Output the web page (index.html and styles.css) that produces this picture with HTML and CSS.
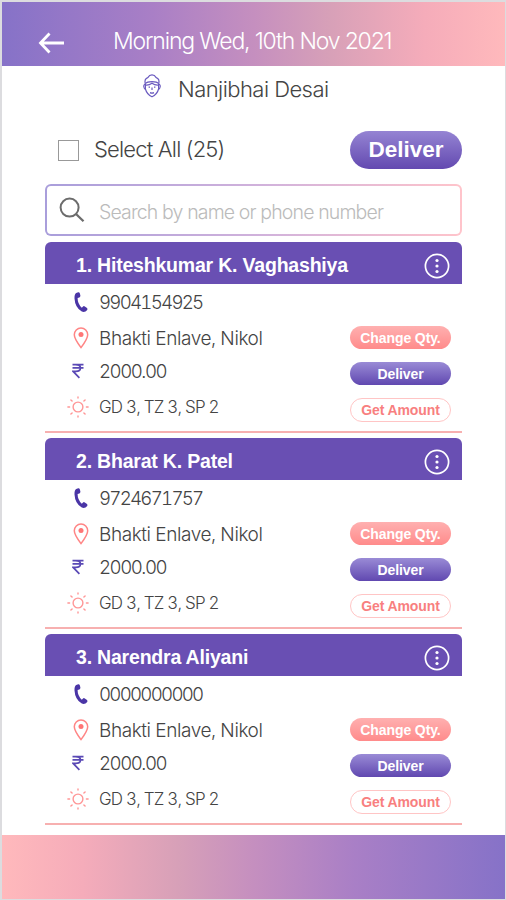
FILE: index.html
```html
<!DOCTYPE html>
<html lang="en">
<head>
    <meta charset="UTF-8">
    <title>Morning Delivery</title>
    <link rel="stylesheet" href="styles.css">
</head>
<body>
    <!-- shared icons -->
    <svg class="icon-defs" width="0" height="0">
        <symbol id="icon-phone" viewBox="0 0 14 21">
            <path d="M2.2 1 L4.2 0.3 Q5.4 .1 5.8 1.3 L6.4 3.6 Q6.4 5 5.4 5.4 L3.6 6 Q3.6 11.8 7.8 15.8 L8.8 14.7 Q9.7 13.7 10.8 14.4 L13 16 Q13.9 16.9 13.2 17.9 Q11 20.8 7.8 19.6 Q1 15.4 .5 6.4 Q.3 2.2 2.2 1 Z" fill="#4a35a6"/>
        </symbol>
        <symbol id="icon-pin" viewBox="0 0 16 22">
            <path d="M8 20.6 Q1.3 11.6 1.3 7.7 A6.7 6.7 0 0 1 14.7 7.7 Q14.7 11.6 8 20.6 Z" fill="none" stroke="#ff8585" stroke-width="1.5"/>
            <circle cx="8" cy="7.6" r="2.5" fill="#ff7575"/>
        </symbol>
        <symbol id="icon-rupee" viewBox="0 0 12 16">
            <path d="M.5 1.6 H11.5 M.5 4.9 H11.5 M3.5 1.6 Q8.4 1.6 8.4 4.9 Q8.4 8.4 3.8 8.4 H1.2 L7.4 14.8" fill="none" stroke="#5a49b5" stroke-width="1.7"/>
        </symbol>
        <symbol id="icon-sun" viewBox="0 0 22 22">
            <g fill="none" stroke="#ff9696" stroke-width="1.4" stroke-linecap="round">
                <circle cx="11" cy="11" r="4.9"/>
                <path d="M11 .9 V2.1 M11 19.9 V21.1 M.9 11 H2.6 M19.4 11 H21.1 M3.9 3.9 L5.1 5.1 M16.9 16.9 L18.1 18.1 M3.9 18.1 L5.1 16.9 M16.9 5.1 L18.1 3.9"/>
            </g>
        </symbol>
        <symbol id="icon-more" viewBox="0 0 26 26">
            <circle cx="13" cy="13" r="11.6" fill="none" stroke="#fff" stroke-width="1.7"/>
            <circle cx="13" cy="7.5" r="1.6" fill="#fff"/>
            <circle cx="13" cy="13" r="1.6" fill="#fff"/>
            <circle cx="13" cy="18.5" r="1.6" fill="#fff"/>
        </symbol>
    </svg>

    <div class="screen">
        <header class="top-bar">
            <svg class="back" width="28" height="24" viewBox="0 0 28 24">
                <path d="M12.5 2.5 L3.5 12 L12.5 21.5 M3.8 12 H27" fill="none" stroke="#fff" stroke-width="2.8"/>
            </svg>
            <h1>Morning Wed, 10th Nov 2021</h1>
        </header>

        <div class="person">
            <svg width="18" height="24" viewBox="0 0 18 24">
                <g fill="none" stroke="#6a5abf" stroke-width="1.2">
                    <path d="M2.2 9.6 Q1.2 4.8 4.8 3.6 Q6.4 .9 9 .9 Q11.6 .9 13.2 3.6 Q16.8 4.8 15.8 9.6"/>
                    <path d="M2.4 9.6 Q4 7.6 9 7.6 Q14 7.6 15.6 9.6 M2.6 11 Q6 11.4 9 9.2 Q12 11.4 15.4 11"/>
                    <path d="M2.4 9.6 V15 Q4 20.6 9 22.8 Q14 20.6 15.6 15 V9.6"/>
                    <path d="M2.4 10.3 Q.5 10.4 .8 12.8 Q1.1 15 2.6 15.3 M15.6 10.3 Q17.5 10.4 17.2 12.8 Q16.9 15 15.4 15.3"/>
                    <path d="M5.6 13.2 H7 M11 13.2 H12.4 M9 13.4 V16 M7 18.6 Q9 19.6 11 18.6"/>
                </g>
            </svg>
            <span>Nanjibhai Desai</span>
        </div>

        <div class="select-row">
            <span class="checkbox"></span>
            <span class="select-label">Select All (25)</span>
            <button class="btn-main">Deliver</button>
        </div>

        <div class="search">
            <svg width="26" height="26" viewBox="0 0 26 26">
                <circle cx="10.6" cy="10.6" r="9" fill="none" stroke="#6c6c6c" stroke-width="2"/>
                <path d="M17 17 L24.5 24.3" stroke="#6c6c6c" stroke-width="2.3"/>
            </svg>
            <span>Search by name or phone number</span>
        </div>

        <ul class="orders">
            <li class="order">
                <div class="order-head">
                    <h2>1. Hiteshkumar K. Vaghashiya</h2>
                    <svg width="26" height="26"><use href="#icon-more"/></svg>
                </div>
                <div class="order-body">
                    <div class="details">
                        <p class="phone"><i><svg width="14" height="21"><use href="#icon-phone"/></svg></i><span>9904154925</span></p>
                        <p class="place"><i><svg width="16" height="22"><use href="#icon-pin"/></svg></i><span>Bhakti Enlave, Nikol</span></p>
                        <p class="amount"><i><svg width="12" height="16"><use href="#icon-rupee"/></svg></i><span>2000.00</span></p>
                        <p class="items"><i><svg width="22" height="22"><use href="#icon-sun"/></svg></i><span>GD 3, TZ 3, SP 2</span></p>
                    </div>
                    <div class="actions">
                        <button class="btn btn-pink">Change Qty.</button>
                        <button class="btn btn-purple">Deliver</button>
                        <button class="btn btn-outline">Get Amount</button>
                    </div>
                </div>
            </li>
            <li class="order">
                <div class="order-head">
                    <h2>2. Bharat K. Patel</h2>
                    <svg width="26" height="26"><use href="#icon-more"/></svg>
                </div>
                <div class="order-body">
                    <div class="details">
                        <p class="phone"><i><svg width="14" height="21"><use href="#icon-phone"/></svg></i><span>9724671757</span></p>
                        <p class="place"><i><svg width="16" height="22"><use href="#icon-pin"/></svg></i><span>Bhakti Enlave, Nikol</span></p>
                        <p class="amount"><i><svg width="12" height="16"><use href="#icon-rupee"/></svg></i><span>2000.00</span></p>
                        <p class="items"><i><svg width="22" height="22"><use href="#icon-sun"/></svg></i><span>GD 3, TZ 3, SP 2</span></p>
                    </div>
                    <div class="actions">
                        <button class="btn btn-pink">Change Qty.</button>
                        <button class="btn btn-purple">Deliver</button>
                        <button class="btn btn-outline">Get Amount</button>
                    </div>
                </div>
            </li>
            <li class="order">
                <div class="order-head">
                    <h2>3. Narendra Aliyani</h2>
                    <svg width="26" height="26"><use href="#icon-more"/></svg>
                </div>
                <div class="order-body">
                    <div class="details">
                        <p class="phone"><i><svg width="14" height="21"><use href="#icon-phone"/></svg></i><span>0000000000</span></p>
                        <p class="place"><i><svg width="16" height="22"><use href="#icon-pin"/></svg></i><span>Bhakti Enlave, Nikol</span></p>
                        <p class="amount"><i><svg width="12" height="16"><use href="#icon-rupee"/></svg></i><span>2000.00</span></p>
                        <p class="items"><i><svg width="22" height="22"><use href="#icon-sun"/></svg></i><span>GD 3, TZ 3, SP 2</span></p>
                    </div>
                    <div class="actions">
                        <button class="btn btn-pink">Change Qty.</button>
                        <button class="btn btn-purple">Deliver</button>
                        <button class="btn btn-outline">Get Amount</button>
                    </div>
                </div>
            </li>
        </ul>

        <footer class="bottom-bar"></footer>
    </div>
</body>
</html>
```

FILE: styles.css
```css
* {
    box-sizing: border-box;
    margin: 0;
    padding: 0;
}
body {
    font-family: Inter, "Liberation Sans", sans-serif;
    font-weight: 300;
    color: #444;
    background: #fff;
    overflow: hidden;
}
svg {
    display: block;
    flex: none;
}
.icon-defs {
    position: absolute;
}
.screen {
    display: flex;
    flex-direction: column;
    width: 506px;
    height: 900px;
    border: solid #dcdcdf;
    border-width: 2px 1px 1px 2px;
    white-space: nowrap;
}
.top-bar {
    display: flex;
    align-items: center;
    height: 64px;
    padding: 14px 0 0 35px;
    background: linear-gradient(90deg, #8672c8, #a97fc6 30%, #c58fbf 50%, #d7a0b8 65%, #f5acba 84%, #ffb9bc);
}
.top-bar .back {
    margin-top: 3px;
}
.top-bar h1 {
    margin-left: 48px;
    font-size: 23px;
    font-weight: 300;
    letter-spacing: -1.16px;
    color: #fff;
}
.person {
    display: flex;
    align-items: center;
    height: 46px;
    padding-left: 141px;
    font-size: 22px;
    letter-spacing: -0.55px;
}
.person svg {
    margin: -6px 17px 0 0;
}
.select-row {
    display: flex;
    align-items: center;
    height: 76px;
    padding: 0 43px 0 56px;
}
.checkbox {
    width: 21px;
    height: 21px;
    border: 1px solid #999;
}
.select-label {
    flex-grow: 1;
    margin: -3px 0 0 15px;
    font-size: 22px;
    letter-spacing: -0.82px;
}
.btn-main {
    width: 112px;
    height: 38px;
    border: 0;
    border-radius: 19px;
    background: linear-gradient(#9584d3, #6349b0);
    color: #fff;
    font: bold 22.5px "Liberation Sans", sans-serif;
}
.search {
    display: flex;
    align-items: center;
    height: 52px;
    margin: -4px 43px 0;
    padding-left: 12px;
    border: 2px solid transparent;
    border-radius: 6px;
    background: linear-gradient(#fff, #fff) padding-box, linear-gradient(90deg, #a99edb, #d3b3db 55%, #ffc4cb) border-box;
    font-size: 19.5px;
    letter-spacing: -0.86px;
    color: #bbb;
}
.search span {
    margin: 3px 0 0 14px;
}
.orders {
    list-style: none;
    margin: 6px 43px 0;
}
.order {
    height: 191px;
    margin-bottom: 5.2px;
    border-bottom: 2px solid #f7b0b0;
}
.order-head {
    display: flex;
    align-items: center;
    justify-content: space-between;
    height: 42px;
    padding: 5px 12px 0 31px;
    border-radius: 6px 6px 0 0;
    background: #694fb3;
    color: #fff;
}
.order-head h2 {
    font: bold 19.5px "Liberation Sans", sans-serif;
    letter-spacing: -0.2px;
}
.order-body {
    display: flex;
    justify-content: space-between;
}
.details p {
    display: flex;
    align-items: center;
    height: 36px;
    font-size: 19px;
    font-variant-numeric: tabular-nums;
}
.details i {
    display: flex;
    justify-content: center;
    width: 22px;
    margin: 0 10px 0 22px;
}
.details .phone {
    font-size: 18.7px;
    letter-spacing: -1.75px;
}
.details .phone i {
    padding-left: 5px;
}
.details .place {
    letter-spacing: -0.42px;
}
.details .place i {
    padding-left: 6px;
}
.details .amount {
    height: 30px;
    font-size: 18.7px;
    letter-spacing: -1.5px;
}
.details .items {
    height: 42px;
    font-size: 17px;
    letter-spacing: -0.8px;
}
.actions {
    display: flex;
    flex-direction: column;
    gap: 13px;
    padding: 42px 11px 0 0;
}
.btn {
    width: 101px;
    height: 23px;
    border: 0;
    border-radius: 12px;
    color: #fff;
    font: bold 14px "Liberation Sans", sans-serif;
    letter-spacing: -0.1px;
}
.btn-pink {
    background: linear-gradient(#ffb0b0, #ff8b8b);
}
.btn-purple {
    padding-top: 1px;
    background: linear-gradient(#9a8bd6, #6048b0);
}
.btn-outline {
    height: 24px;
    border: 1px solid #ffc5c5;
    background: #fff;
    color: #f87f7f;
}
.bottom-bar {
    height: 64px;
    margin-top: auto;
    background: linear-gradient(270deg, #8672c8, #a97fc6 30%, #c58fbf 50%, #d7a0b8 65%, #f5acba 84%, #ffb9bc);
}
```
